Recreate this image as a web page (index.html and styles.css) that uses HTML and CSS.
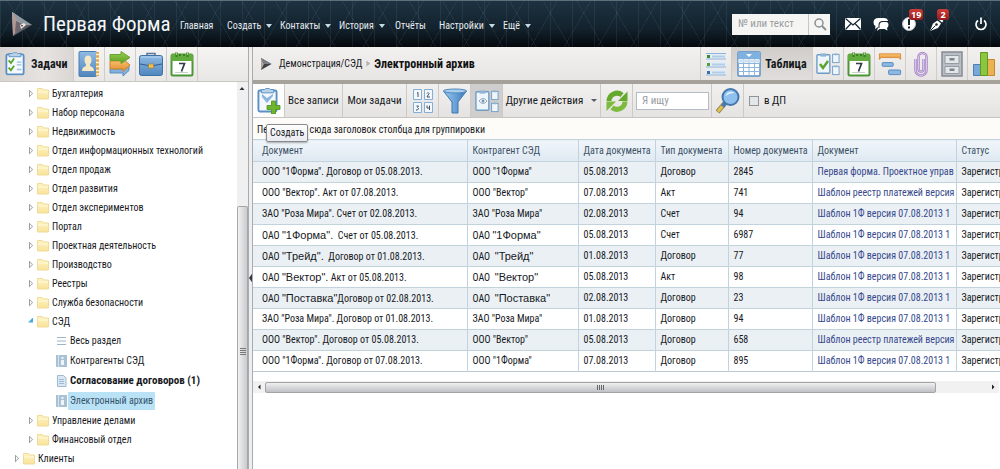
FILE: index.html
```html
<!DOCTYPE html>
<html lang="ru">
<head>
<meta charset="utf-8">
<title>Первая Форма — Электронный архив</title>
<link rel="stylesheet" href="styles.css">
</head>
<body>
<svg class="defs" aria-hidden="true">
  <defs>
    <linearGradient id="gMetal" x1="0" y1="0" x2="1" y2="1"><stop offset="0" stop-color="#e9d9d4"/><stop offset=".45" stop-color="#77727c"/><stop offset="1" stop-color="#2b3038"/></linearGradient>
    <linearGradient id="gBlue" x1="0" y1="0" x2="0" y2="1"><stop offset="0" stop-color="#8fbbe4"/><stop offset="1" stop-color="#4f86be"/></linearGradient>
    <linearGradient id="gFunnel" x1="0" y1="0" x2="1" y2="0"><stop offset="0" stop-color="#9cc8ee"/><stop offset=".5" stop-color="#6ba3d8"/><stop offset="1" stop-color="#3d79b8"/></linearGradient>
    <linearGradient id="gFolder" x1="0" y1="0" x2="0" y2="1"><stop offset="0" stop-color="#fdf3c4"/><stop offset="1" stop-color="#f9e39a"/></linearGradient>
    <linearGradient id="gGreen" x1="0" y1="0" x2="0" y2="1"><stop offset="0" stop-color="#9ad04e"/><stop offset="1" stop-color="#5a9e24"/></linearGradient>
    <linearGradient id="gOrange" x1="0" y1="0" x2="0" y2="1"><stop offset="0" stop-color="#f9c878"/><stop offset="1" stop-color="#e08a2c"/></linearGradient>
    <symbol id="folder" viewBox="0 0 12 12"><path d="M.5 2.500V.5h5l1 1.500h5v9H.5z" fill="url(#gFolder)" stroke="#f0dc98"/><path d="M1 4h10" stroke="#fffbe0"/></symbol>
    <symbol id="info" viewBox="0 0 11 12"><rect width="11" height="12" fill="#a9c2d3"/><path d="M2.500 0v12" stroke="#d5e2eb"/><path d="M5.500 2h2v2h-2zM5 5h3v5H5z" fill="#eef5f9"/></symbol>
    <symbol id="calendar" viewBox="0 0 24 26"><rect x="1.500" y="3.500" width="21" height="21" rx="1.500" fill="#fff" stroke="#4d9636" stroke-width="2"/><path d="M1 3h22v7H1z" fill="#62ab3f"/><path d="M6.500 1v5M17.500 1v5M10 3v2M14 3v2" stroke="#3f7d2a" stroke-width="2"/><path d="M6.500 1v3M17.500 1v3" stroke="#a7d486"/><path d="M9 12.500h5.500l-3 8" fill="none" stroke="#333b44" stroke-width="1.700"/><path d="M5 21.500h13" stroke="#c9cfc9"/></symbol>
    <symbol id="boards" viewBox="0 0 26 26"><rect x="1" y="3" width="14" height="20" rx="1" fill="#eef5fb" stroke="#6f9cc6" stroke-width="1.500"/><path d="M5 1.500h6V5H5z" fill="#8fb4d6"/><rect x="18" y="2.500" width="7" height="9" fill="#eef5fb" stroke="#6f9cc6"/><rect x="18" y="15.500" width="7" height="9" fill="#eef5fb" stroke="#6f9cc6"/><path d="M20 1.500h3v2h-3zM20 14.500h3v2h-3z" fill="#8fb4d6"/></symbol>
    <symbol id="clip" viewBox="0 0 22 26"><rect x="1.500" y="2.500" width="19" height="22" rx="1.500" fill="#f4f9fd" stroke="#5b90c2" stroke-width="2"/><path d="M4.500 3V1.500h3.500l1-1h4l1 1h3.500V5h-13z" fill="#b8d2ea" stroke="#5b90c2"/></symbol>
  </defs>
</svg>

<header class="top">
  <svg class="logo" viewBox="0 0 22 26"><path d="M1 1l20 13L2 25z" fill="url(#gMetal)"/><path d="M1 1l8 13-7 11z" fill="#b29a93"/><path d="M1 1l20 13H9z" fill="#8f9aa3"/><path d="M5 10l8 4-9 7z" fill="#6e666c"/><path d="M9 14l4-2 2 2-5 4z" fill="#f3e8dd"/><path d="M10 14l2 0-1 2z" fill="#26282e"/></svg>
  <div class="brand">Первая Форма</div>
  <nav class="menu">
    <a href="#">Главная</a>
    <a href="#" class="drop">Создать</a>
    <a href="#" class="drop">Контакты</a>
    <a href="#" class="drop">История</a>
    <a href="#">Отчёты</a>
    <a href="#" class="drop">Настройки</a>
    <a href="#" class="drop">Ещё</a>
  </nav>
  <form class="search">
    <input type="text" placeholder="№ или текст" aria-label="№ или текст">
    <button type="button" aria-label="Найти"><svg viewBox="0 0 14 14"><circle cx="6" cy="6" r="4" fill="none" stroke="#8b8f92" stroke-width="1.500"/><path d="M9 9l4 4" stroke="#8b8f92" stroke-width="2"/></svg></button>
  </form>
  <div class="alerts">
    <button aria-label="Почта"><svg viewBox="0 0 16 16"><path d="M0 2h16v12H0z" fill="#fff"/><path d="M.5 2.500L8 9l7.500-6.500M.5 13.500l5.500-6M15.500 13.500L10 7.500" fill="none" stroke="#172631" stroke-width="1.200"/></svg></button>
    <button aria-label="Сообщения"><svg viewBox="0 0 16 16"><path d="M5.500 2H11q3.500 0 4 3H9.500Q5.500 5 5.500 9v2H5l-3 2 .5-3Q.5 9 .5 6.500.5 2 5.500 2z" fill="#fff"/><path d="M10 6h3q2.500 0 2.500 3 0 2-1.500 3l.5 2.500L11.500 13H6.500L4 15l1-3.500 1.500.5V9.500Q6.500 6 10 6z" fill="#fff"/></svg></button>
    <button aria-label="Уведомления"><svg viewBox="0 0 16 16"><circle cx="8" cy="8" r="6.500" fill="#fff" stroke="#b9c0c4"/><path d="M8 3v6M8 10.500v2" stroke="#14202a" stroke-width="2"/></svg><span class="badge">19</span></button>
    <button aria-label="Подписи"><svg viewBox="0 0 16 16"><path d="M1 15L4 7.500 8.500 4.500l3.500 3L9 12z" fill="#fff"/><path d="M9.500 3.500l1.500-1.500 3.500 3-1.500 1.500z" fill="#fff"/><path d="M1.500 14.500L6.500 9.500" stroke="#14202a"/><circle cx="7.500" cy="8.500" r="1.200" fill="#14202a"/></svg><span class="badge">2</span></button>
    <button aria-label="Выход" class="power"><svg viewBox="0 0 16 16"><path d="M5 4.500a5 5 0 1 0 6 0M8 1.500v6.500" fill="none" stroke="#fff" stroke-width="1.700"/></svg></button>
  </div>
</header>

<div class="work">
  <aside class="side">
    <div class="tabs">
      <button class="tab named"><svg class="ic" viewBox="0 0 22 26"><use href="#clip"/><path d="M4 9l2.500 3L10 7M4 17l2.500 3L10 15" fill="none" stroke="#5aa32c" stroke-width="2"/><path d="M13 11h5M13 14h5M13 19h5" stroke="#9dbcd6" stroke-width="1.500"/></svg>Задачи</button>
      <button class="tab" aria-label="Контакты"><svg class="ic" viewBox="0 0 22 26"><rect x="1" y=".5" width="17.500" height="25" rx="1" fill="url(#gBlue)" stroke="#4a7fb2"/><path d="M18 1h3v24h-3z" fill="#e0a74c"/><path d="M18 3.500h4M18 7.500h4M18 11.500h4M18 15.500h4M18 19.500h4M18 23h4" stroke="#fff3d4" stroke-width="1.500"/><ellipse cx="10" cy="9" rx="3.500" ry="4.500" fill="#f6e7c6"/><path d="M4 20q0-4 4-5v-3h4v3q4 1 4 5z" fill="#f6e7c6"/></svg></button>
      <button class="tab" aria-label="Маршруты"><svg class="ic" viewBox="0 0 22 26"><path d="M1 18h12l7-3.500v5l-6 5.500v-3H1z" fill="#7fb0df" stroke="#5b8dc0"/><path d="M1 10h13V8l7 6-7 6.500V18H1z" fill="url(#gOrange)" stroke="#c98530"/><path d="M1 3.500h11V.5l9 6-9 6v-3H1z" fill="url(#gGreen)" stroke="#6aa32f"/></svg></button>
      <button class="tab" aria-label="Портфель"><svg class="ic" viewBox="0 0 24 26"><path d="M8 5V2.500h8V5" fill="none" stroke="#557799" stroke-width="1.500"/><rect x=".5" y="4.500" width="23" height="20" rx="2" fill="url(#gBlue)" stroke="#3f71a5"/><path d="M1 13l11 2 11-2" stroke="#2f5f93" fill="none"/><path d="M2 6h20" stroke="#b5d3ee"/><rect x="9.500" y="13" width="5" height="4" fill="#eec25b" stroke="#a88131" stroke-width=".7"/></svg></button>
      <button class="tab" aria-label="Календарь"><svg class="ic"><use href="#calendar"/></svg></button>
    </div>
    <div class="side-body">
      <ul class="tree">
        <li><i class="arr"></i><svg class="fold"><use href="#folder"/></svg>Бухгалтерия</li>
        <li><i class="arr"></i><svg class="fold"><use href="#folder"/></svg>Набор персонала</li>
        <li><i class="arr"></i><svg class="fold"><use href="#folder"/></svg>Недвижимость</li>
        <li><i class="arr"></i><svg class="fold"><use href="#folder"/></svg>Отдел информационных технологий</li>
        <li><i class="arr"></i><svg class="fold"><use href="#folder"/></svg>Отдел продаж</li>
        <li><i class="arr"></i><svg class="fold"><use href="#folder"/></svg>Отдел развития</li>
        <li><i class="arr"></i><svg class="fold"><use href="#folder"/></svg>Отдел экспериментов</li>
        <li><i class="arr"></i><svg class="fold"><use href="#folder"/></svg>Портал</li>
        <li><i class="arr"></i><svg class="fold"><use href="#folder"/></svg>Проектная деятельность</li>
        <li><i class="arr"></i><svg class="fold"><use href="#folder"/></svg>Производство</li>
        <li><i class="arr"></i><svg class="fold"><use href="#folder"/></svg>Реестры</li>
        <li><i class="arr"></i><svg class="fold"><use href="#folder"/></svg>Служба безопасности</li>
        <li><i class="arr open"></i><svg class="fold"><use href="#folder"/></svg>СЭД</li>
        <li class="sub"><svg class="leaf" viewBox="0 0 11 12"><path d="M1 2.500h9M1 6h9M1 9.500h9" stroke="#9fb4c4"/></svg><a href="#">Весь раздел</a></li>
        <li class="sub"><svg class="leaf"><use href="#info"/></svg><a href="#">Контрагенты СЭД</a></li>
        <li class="sub"><svg class="leaf" viewBox="0 0 11 12"><path d="M1.500.5h6l2.500 2.500v8.500H1.500z" fill="#dbe8f3" stroke="#9dbbd2"/><path d="M3 4.500h5M3 6.500h5M3 8.500h5" stroke="#9dbbd2"/></svg><a href="#"><b>Согласование договоров (1)</b></a></li>
        <li class="sub"><svg class="leaf"><use href="#info"/></svg><a href="#" class="current">Электронный архив</a></li>
        <li><i class="arr"></i><svg class="fold"><use href="#folder"/></svg>Управление делами</li>
        <li><i class="arr"></i><svg class="fold"><use href="#folder"/></svg>Финансовый отдел</li>
        <li class="root"><i class="arr"></i><svg class="fold"><use href="#folder"/></svg>Клиенты</li>
      </ul>
      <div class="vbar"><svg class="vup" viewBox="0 0 10 12"><path d="M2.500 8L5 5l2.500 3z" fill="#333"/></svg><div class="vthumb"><i></i></div></div>
    </div>
  </aside>
  <div class="split"><span></span></div>

  <main class="main">
    <div class="crumbs">
      <svg class="play" viewBox="0 0 12 14"><path d="M1 1l10.500 6L1 13z" fill="#3f4248"/><path d="M1 1l3 6-3 6z" fill="#b5a39e"/><path d="M4 7h7.500L1 1z" fill="#7b8087"/></svg>
      <a href="#">Демонстрация/СЭД</a><i class="step"></i><b>Электронный архив</b>
      <div class="views">
        <button class="tab" aria-label="Список"><svg class="ic" viewBox="0 0 24 26"><path d="M2 2h20v6H2zM2 10h20v6H2zM2 18h20v6H2z" fill="#e3edf7"/><path d="M2 2.500h20M2 8h20M2 16h20M2 24h20" stroke="#8fb4da"/><path d="M8 5.500h13M8 13.500h13M8 21.500h13" stroke="#b3cde6" stroke-width="2"/><path d="M3 4h3v3H3z" fill="#3d8a2a"/><path d="M3 12h3v3H3z" fill="#55a02f"/><path d="M3 20h3v3H3z" fill="#3e6fa6"/></svg></button>
        <button class="tab named active"><svg class="ic" viewBox="0 0 24 26"><rect x="1" y="1" width="22" height="24" rx="1" fill="#fff" stroke="#5b90c6" stroke-width="1.500"/><path d="M1 1h22v7H1z" fill="#7eb0e0"/><path d="M1 12.500h22M1 16.500h22M1 20.500h22M6.500 8v17M12 8v17M17.500 8v17" stroke="#8db6de"/><path d="M1 10h22" stroke="#cfe0f0" stroke-width="3"/><path d="M9 3h6l-3 3z" fill="#fff"/></svg>Таблица</button>
        <button class="tab" aria-label="Задачи"><svg class="ic"><use href="#boards"/><path d="M4 13l3 4 5-7" fill="none" stroke="#5aa32c" stroke-width="2.500"/></svg></button>
        <button class="tab" aria-label="Календарь"><svg class="ic"><use href="#calendar"/></svg></button>
        <button class="tab" aria-label="Диаграмма"><svg class="ic" viewBox="0 0 26 26"><path d="M1.500 2h23v6l-2-2h-19l-2 2z" fill="url(#gOrange)" stroke="#d98a35"/><rect x="4.500" y="11.500" width="12" height="4" rx="1" fill="#8db9e3" stroke="#4f86bd"/><rect x="11.500" y="19.500" width="13" height="5" rx="1" fill="#8db9e3" stroke="#4f86bd"/></svg></button>
        <button class="tab" aria-label="Вложения"><svg class="ic" viewBox="0 0 24 26"><path d="M6.500 8v11a5 5 0 0 0 11 0V6a4 4 0 0 0-8 0v12a2.500 2.500 0 0 0 5 0V8" fill="none" stroke="#a583c4" stroke-width="2.500"/><path d="M6.500 8v11a5 5 0 0 0 11 0V6a4 4 0 0 0-8 0v12a2.500 2.500 0 0 0 5 0V8" fill="none" stroke="#d9c4ec"/></svg></button>
        <button class="tab" aria-label="Архив"><svg class="ic" viewBox="0 0 24 26"><rect x="2" y="1" width="20" height="24" fill="#b9bec4" stroke="#858c94" stroke-width="1.500"/><path d="M5 4.500h14v8H5zM5 15.500h14v7H5z" fill="#e4e7ea" stroke="#959ba2"/><path d="M9.500 7h5v2.500h-5zM9.500 17.500h5V20h-5z" fill="#7b838c"/></svg></button>
        <button class="tab" aria-label="Отчёты"><svg class="ic" viewBox="0 0 24 26"><path d="M1.500 13.500h7v11h-7z" fill="#76a8d8" stroke="#4a80b5"/><path d="M15.500 8.500h7v16h-7z" fill="#ecb153" stroke="#c58a2e"/><path d="M8.500 1.500h7v23h-7z" fill="#8cc63f" stroke="#5f9a28"/></svg></button>
      </div>
    </div>

    <div class="tools">
      <button class="tool white" aria-label="Создать"><svg class="ic" viewBox="0 0 24 26"><use href="#clip" width="21" height="25"/><path d="M5 9l5 6 6-7v-2l-6 4-5-4z" fill="#8bb5dc"/><path d="M14.500 13h4v4.500H23v4h-4.500V26h-4v-4.500H10v-4h4.500z" fill="#6db52c" stroke="#4d8f1c" stroke-width=".8"/></svg></button>
      <button class="tool text all">Все записи</button>
      <button class="tool text mine">Мои задачи</button>
      <button class="tool" aria-label="Нумерация"><svg class="ic" viewBox="0 0 24 26"><g fill="#f1f7fc" stroke="#83afd6"><path d="M2.500 1.500h8v10h-8zM13.500 1.500h8v10h-8zM2.500 14.500h8v10h-8zM13.500 14.500h8v10h-8z"/></g><g fill="none" stroke="#45525e"><path d="M6 5l1-.5V9M16 5.500l1-1 1 1-2 3.500h3M5.500 18h2l-1 1.500 1 1-1 1.500h-1.500M16 17.500v2.500h3M18.500 17.500V22"/></g></svg></button>
      <button class="tool" aria-label="Фильтр"><svg class="ic" viewBox="0 0 24 26"><path d="M.5 3L9 14v11h6V14L23.500 3z" fill="url(#gFunnel)" stroke="#3f77b0"/><ellipse cx="12" cy="3" rx="11.500" ry="2" fill="#a9cdec" stroke="#4e86bd"/></svg></button>
      <button class="tool pressed" aria-label="Связи"><svg class="ic"><use href="#boards"/><path d="M4 13q4-5 8 0-4 5-8 0z" fill="#fff" stroke="#8da9c0"/><circle cx="8" cy="13" r="1.500" fill="#7792aa"/></svg></button>
      <button class="tool text more">Другие действия<i class="tri"></i></button>
      <button class="tool" aria-label="Обновить"><svg class="ic" viewBox="0 0 24 26"><path d="M4 13a8 8 0 0 1 13-6" fill="none" stroke="#64a82d" stroke-width="5"/><path d="M22.500 3.500V13h-9.500z" fill="#64a82d"/><path d="M20 13.500a8 8 0 0 1-13 6" fill="none" stroke="#7cbb3c" stroke-width="5"/><path d="M1.500 23v-9.500H11z" fill="#7cbb3c"/></svg></button>
      <div class="find"><input type="text" placeholder="Я ищу" aria-label="Я ищу"></div>
      <button class="tool" aria-label="Поиск"><svg class="ic" viewBox="0 0 24 26"><path d="M9 15l-7.500 9" stroke="#8f8358" stroke-width="5"/><path d="M8.500 15.500L2 23.500" stroke="#e3c14b" stroke-width="3"/><path d="M9.500 14.500l-3 4" stroke="#4a7ab0" stroke-width="4"/><circle cx="14.500" cy="9" r="8" fill="#8fc1ee" stroke="#4377ad" stroke-width="2"/><path d="M9.500 8a5.500 5.500 0 0 1 9-3q-5 0-9 3z" fill="#dff0fc"/></svg></button>
      <label class="check"><input type="checkbox">в ДП</label>
    </div>

    <div class="group">Перетащите сюда заголовок столбца для группировки<span class="tip">Создать</span></div>

    <table class="grid">
      <colgroup><col class="c1"><col class="c2"><col class="c3"><col class="c4"><col class="c5"><col class="c6"><col></colgroup>
      <thead><tr><th>Документ</th><th>Контрагент СЭД</th><th>Дата документа</th><th>Тип документа</th><th>Номер документа</th><th>Документ</th><th>Статус</th></tr></thead>
      <tbody>
        <tr><td>ООО "1Форма". Договор от 05.08.2013.</td><td>ООО "1Форма"</td><td>05.08.2013</td><td>Договор</td><td>2845</td><td><a href="#">Первая форма. Проектное управ</a></td><td>Зарегистр</td></tr>
        <tr><td>ООО "Вектор". Акт от 07.08.2013.</td><td>ООО "Вектор"</td><td>07.08.2013</td><td>Акт</td><td>741</td><td><a href="#">Шаблон реестр платежей версия</a></td><td>Зарегистр</td></tr>
        <tr><td>ЗАО "Роза Мира". Счет от 02.08.2013.</td><td>ЗАО "Роза Мира"</td><td>02.08.2013</td><td>Счет</td><td>94</td><td><a href="#">Шаблон 1Ф версия 07.08.2013 1</a></td><td>Зарегистр</td></tr>
        <tr><td>ОАО <span class="alt">"1Форма".</span>&nbsp; Счет от 05.08.2013.</td><td>ОАО <span class="alt">"1Форма"</span></td><td>05.08.2013</td><td>Счет</td><td>6987</td><td><a href="#">Шаблон 1Ф версия 07.08.2013 1</a></td><td>Зарегистр</td></tr>
        <tr><td>ОАО <span class="alt">"Трейд".</span>&nbsp; Договор от 01.08.2013.</td><td>ОАО&nbsp; <span class="alt">"Трейд"</span></td><td>01.08.2013</td><td>Договор</td><td>77</td><td><a href="#">Шаблон 1Ф версия 07.08.2013 1</a></td><td>Зарегистр</td></tr>
        <tr><td>ОАО <span class="alt">"Вектор".</span> Акт от 05.08.2013.</td><td>ОАО&nbsp; <span class="alt">"Вектор"</span></td><td>05.08.2013</td><td>Акт</td><td>98</td><td><a href="#">Шаблон 1Ф версия 07.08.2013 1</a></td><td>Зарегистр</td></tr>
        <tr><td>ОАО <span class="alt">"Поставка"</span>Договор от 02.08.2013.</td><td>ОАО&nbsp; <span class="alt">"Поставка"</span></td><td>02.08.2013</td><td>Договор</td><td>23</td><td><a href="#">Шаблон 1Ф версия 07.08.2013 1</a></td><td>Зарегистр</td></tr>
        <tr><td>ЗАО "Роза Мира". Договор от 01.08.2013.</td><td>ЗАО "Роза Мира"</td><td>01.08.2013</td><td>Договор</td><td>94</td><td><a href="#">Шаблон 1Ф версия 07.08.2013 1</a></td><td>Зарегистр</td></tr>
        <tr><td>ООО "Вектор". Договор от 05.08.2013.</td><td>ООО "Вектор"</td><td>05.08.2013</td><td>Договор</td><td>658</td><td><a href="#">Шаблон реестр платежей версия</a></td><td>Зарегистр</td></tr>
        <tr><td>ООО "1Форма". Договор от 07.08.2013.</td><td>ООО "1Форма"</td><td>07.08.2013</td><td>Договор</td><td>895</td><td><a href="#">Шаблон 1Ф версия 07.08.2013 1</a></td><td>Зарегистр</td></tr>
      </tbody>
    </table>

    <div class="hbar">
      <svg viewBox="0 0 12 12"><path d="M7.500 3.500L5 6l2.500 2.500z" fill="#222"/></svg>
      <div class="htrack"><div class="hthumb"><i></i></div></div>
      <svg viewBox="0 0 12 12"><path d="M5 3.500L7.500 6 5 8.500z" fill="#222"/></svg>
    </div>
  </main>
</div>
</body>
</html>
```
FILE: styles.css
```css
* { box-sizing: border-box; }
body {
  margin: 0;
  height: 100vh;
  display: flex;
  flex-direction: column;
  overflow: hidden;
  background: #fff;
  color: #16191d;
  font: 10px/14px "Roboto Condensed", "DejaVu Sans Condensed", sans-serif;
}
button, input { font: inherit; color: inherit; margin: 0; }
button { border: 0; padding: 0; background: none; }
a { color: inherit; text-decoration: none; }
svg { flex: none; display: block; }
.defs { position: absolute; width: 0; height: 0; }

/* Top bar */
.top {
  flex: none;
  height: 47px;
  display: flex;
  align-items: center;
  padding: 0 11px;
  color: #e6ecf0;
  border-top: 1px solid #5c7079;
  background:
    repeating-linear-gradient(60deg, rgba(120, 160, 180, .1) 0 1px, transparent 1px 29px),
    repeating-linear-gradient(-60deg, rgba(120, 160, 180, .1) 0 1px, transparent 1px 29px),
    repeating-linear-gradient(90deg, rgba(120, 160, 180, .12) 0 1px, transparent 1px 22px),
    linear-gradient(#1d3241, #13222d 60%, #0a1219 85%, #04080c);
}
.logo { width: 22px; height: 26px; margin-right: 10px; }
.brand { font-size: 21px; line-height: 26px; width: 137px; color: #f4f7f8; white-space: nowrap; }
.menu { display: grid; grid-template-columns: 47px 53px 59px 56px 44px 64px auto; padding-top: 4px; }
.drop { display: flex; align-items: center; gap: 5px; }
.drop::after { content: ""; border: 3px solid transparent; border-top: 4px solid #c4dae4; border-bottom: 0; }
.search { display: flex; width: 98px; height: 21px; margin-left: auto; background: #f5f5f3; }
.search input { width: 77px; border: 0; border-right: 1px solid #c5c7c7; padding: 0 6px; background: none; font-size: 11px; }
.search button { flex: 1; display: grid; place-items: center; }
.search svg { width: 14px; height: 14px; }
::placeholder { color: #9a9c9e; opacity: 1; }
.alerts { display: flex; gap: 12px; margin-left: 15px; }
.alerts button { position: relative; }
.alerts svg { width: 16px; height: 16px; }
.alerts .power { margin-left: 16px; }
.badge {
  position: absolute;
  left: 8px;
  top: -7px;
  min-width: 12px;
  padding: 0 2px;
  border-radius: 3px;
  background: linear-gradient(#cf3c37, #961a1a);
  color: #fff;
  font: bold 9px/11px "Noto Sans", sans-serif;
}

/* Two-pane work area */
.work { flex: 1; min-height: 0; display: flex; }
.side { flex: none; width: 248px; display: flex; flex-direction: column; }
.side-body { flex: 1; min-height: 0; display: flex; }
.tabs { flex: none; height: 35px; display: flex; background: linear-gradient(#f6f4f2, #e8e7e5); border-bottom: 1px solid #c9c7c4; }
.tab { flex: none; width: 31px; display: flex; align-items: center; justify-content: center; border-right: 1px solid #cfccc9; }
.tab.named { font-size: 12px; font-weight: bold; color: #15181b; background: linear-gradient(90deg, #d8d4d1, #e6e3e1 60%, #dad6d3); gap: 6px; padding: 0 4px; }
.tabs .named { width: 74px; justify-content: flex-start; padding-left: 5px; }
.ic { width: 24px; height: 26px; }
.tabs .named .ic { width: 20px; }

.tree { flex: 1; margin: 0; padding: 2px 0 0 28px; list-style: none; overflow: hidden; }
.tree li { height: 19px; display: flex; align-items: center; white-space: nowrap; }
.tree .sub { height: 20px; padding-left: 28px; }
.tree .root { margin-left: -14px; }
.tree b { font-size: 11px; }
.sub a { padding: 2px; }
.sub .current { background: #b9e2f7; color: #36536a; }
.arr { width: 9px; height: 8px; background: #9a9ea2; clip-path: polygon(1px 0, 5px 50%, 1px 100%, 1px 0, 2px 2px, 2px 6px, 4px 50%, 2px 2px); }
.arr.open { background: #46abd6; clip-path: polygon(5px 0, 5px 5px, 0 5px); }
.fold { width: 12px; height: 12px; margin-right: 3px; }
.leaf { width: 11px; height: 12px; margin-right: 1px; }

.vbar { width: 11px; background: #f0f0f1; display: flex; flex-direction: column; }
.vup { width: 10px; height: 12px; margin-bottom: auto; }
.vthumb { height: 68%; display: grid; place-items: center; border: 1px solid #a6a7aa; border-bottom: 0; background: linear-gradient(90deg, #f1f1f2, #c9cacd); border-radius: 2px 2px 0 0; }
.vthumb i { width: 6px; height: 7px; margin-top: 28px; background: repeating-linear-gradient(#77787b 0 1px, transparent 1px 2px); }

.split { flex: none; width: 5px; display: flex; align-items: center; background: #eceef0; border-left: 1px solid #a9abae; border-right: 1px solid #a9abae; }
.split span { width: 3px; height: 21px; margin-top: 40px; background: #33363a; clip-path: polygon(100% 30%, 0 50%, 100% 70%); }

/* Content pane */
.main { flex: 1; min-width: 0; overflow: hidden; display: flex; flex-direction: column; }
.crumbs { flex: none; height: 37px; display: flex; align-items: center; padding-left: 7px; background: linear-gradient(#f3f1ef, #e7e5e3); border-bottom: 4px solid #a5a29c; white-space: nowrap; }
.play { width: 12px; height: 14px; margin-right: 7px; }
.crumbs > b { font-size: 12px; color: #111; }
.step { width: 4px; height: 6px; margin: 0 4px; background: #b3b3b3; clip-path: polygon(0 0, 100% 50%, 0 100%); }
.views { display: flex; margin-left: auto; align-self: stretch; border-left: 1px solid #cfccc9; }
.views .named { width: 81px; background: linear-gradient(#d0cdca, #e0dedc); gap: 4px; padding: 0; }
.views .tab:last-child { border-right: 0; width: 32px; }

.tools { flex: none; height: 34px; display: flex; background: linear-gradient(#f2f1ef, #e4e3e1); border-bottom: 1px solid #c6c5c2; white-space: nowrap; }
.tool { flex: none; width: 32px; display: flex; align-items: center; justify-content: center; border-right: 1px solid #cccac7; }
.tool.white { background: #fdfdfd; }
.tool.pressed { background: #d0cecc; }
.text { font-size: 11px; }
.all { width: 58px; }
.mine { width: 64px; }
.more { width: 98px; gap: 8px; }
.tri { border: 3px solid transparent; border-top-color: #555a66; border-bottom: 0; }
.find { width: 79px; display: flex; align-items: center; padding: 0 3px; border-right: 1px solid #cccac7; font-size: 11px; }
.find input { width: 73px; height: 18px; border: 1px solid #b4bcc6; background: #fff; padding: 0 5px; }
.check { display: flex; align-items: center; gap: 5px; padding-left: 5px; font-size: 11px; }
.check input { appearance: none; width: 10px; height: 10px; border: 1px solid #8f9499; background: #e4e7ea; }

.group { flex: none; position: relative; height: 21px; padding: 5px 4px 0; line-height: 14px; background: #fdfcf9; white-space: nowrap; }
.tip {
  position: absolute;
  left: 13px;
  top: 6px;
  padding: 1px 3px;
  border: 1px solid #8b8b8e;
  border-radius: 2px;
  background: linear-gradient(#fff, #e9eaf1);
  box-shadow: 0 1px 2px rgba(0, 0, 0, .3);
}

.grid { flex: none; width: 100%; table-layout: fixed; border-collapse: collapse; border-bottom: 1px solid #b8c9d5; }
.c1 { width: 214px; }
.c2 { width: 111px; }
.c3 { width: 77px; }
.c4 { width: 73px; }
.c5 { width: 84px; }
.c6 { width: 144px; }
.grid th, .grid td { height: 21px; padding: 0 0 0 5px; text-align: left; white-space: nowrap; overflow: hidden; border: 1px solid #c3d3de; border-width: 1px 1px 0 0; }
.grid th:first-child, .grid td:first-child { padding-left: 9px; }
.grid th:last-child, .grid td:last-child { border-right: 0; }
.grid th { height: 22px; font-weight: normal; color: #3c5166; background: linear-gradient(#f0f6fa, #dfe9f2); }
.grid tbody tr:nth-child(odd) { background: #ebf0f4; }
.grid td a { color: #35498c; }
.alt { font: 11px/14px "Liberation Sans", sans-serif; }

.hbar { flex: none; display: flex; align-items: center; height: 12px; margin: 9px 1px 0 0; background: #f1f1f2; }
.hbar svg { width: 12px; height: 12px; }
.htrack { flex: 1; }
.hthumb { width: 93%; height: 11px; display: grid; place-items: center; border: 1px solid #a3a3a6; border-radius: 2px; background: linear-gradient(#f0f0f1, #bfc0c3); }
.hthumb i { width: 7px; height: 5px; background: repeating-linear-gradient(90deg, #66676a 0 1px, transparent 1px 2px); }
```
